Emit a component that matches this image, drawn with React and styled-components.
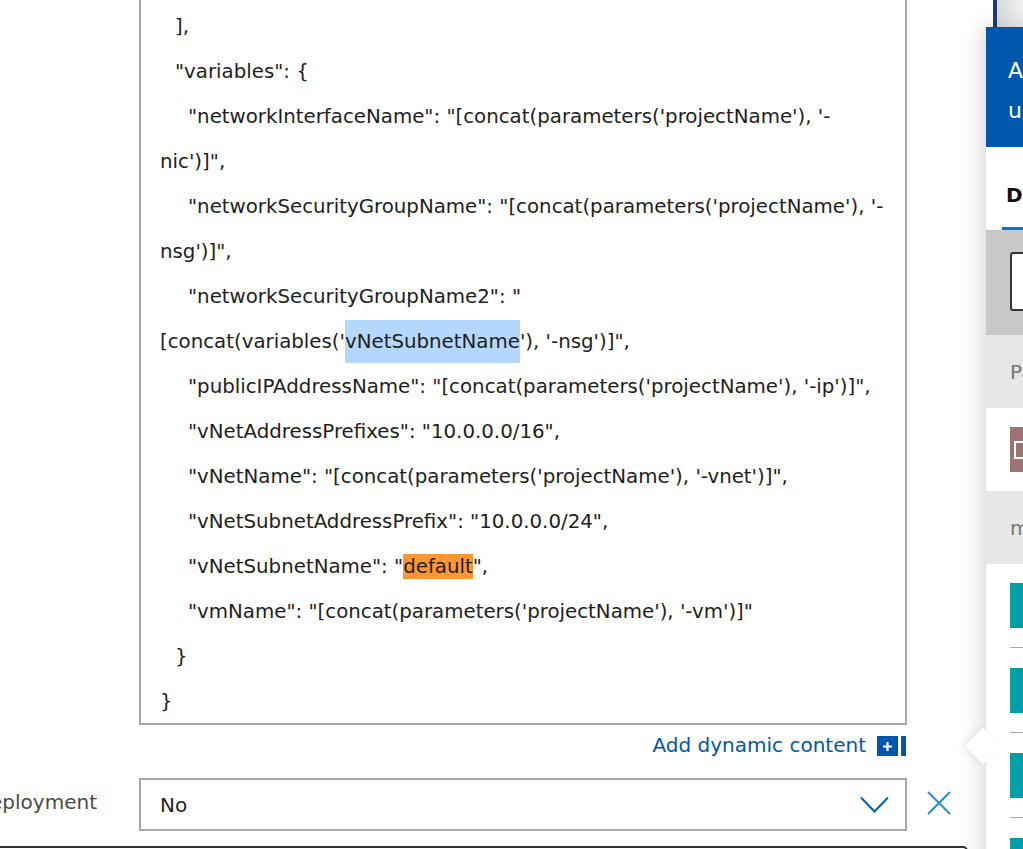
import React from "react";
import styled, { createGlobalStyle } from "styled-components";

const Global = createGlobalStyle`
  html, body { margin: 0; padding: 0; background: #fff; overflow: hidden; }
  body { font-family: "DejaVu Sans", Verdana, sans-serif; }
`;

const Page = styled.div`
  position: relative;
  width: 1023px;
  height: 849px;
  overflow: hidden;
  background: #fff;
`;

const Form = styled.div`
  display: grid;
  grid-template-columns: 139px 768px 1fr;
  margin-top: -21px;
  color: #1e1e1e;
  font-size: 20px;
`;

const CodeBox = styled.div`
  grid-column: 2;
  border: 2px solid #a8a8a8;
  padding: 22px 0 0 19px;
  box-sizing: border-box;
  font-size: 19.8px;
`;

const indentMap = { 0: 0, 1: 15, 2: 28 };

const CodeLine = styled.div`
  white-space: pre;
  line-height: 43px;
  height: 45px;
  padding-top: 2px;
  box-sizing: border-box;
  padding-left: ${(p) => indentMap[p.$indent]}px;
`;

const Selected = styled.span`
  background: #b4d7ff;
  padding: 10px 0;
`;

const Hit = styled.span`
  background: #ff9632;
  padding: 1px 0;
`;

const LinkRow = styled.div`
  grid-column: 2;
  display: flex;
  justify-content: flex-end;
  align-items: flex-start;
  gap: 11px;
  height: 53px;
  padding-top: 9px;
  box-sizing: border-box;
  margin-right: 1px;
`;

const Link = styled.span`
  color: #0058ad;
  font-size: 20px;
  line-height: 23px;
`;

const AddIcon = styled.span`
  display: flex;
  gap: 3px;
  height: 20px;
  margin-top: 2px;
`;

const AddSquare = styled.span`
  width: 21px;
  height: 20px;
  background: #0058ad;
  display: flex;
  align-items: center;
  justify-content: center;
`;

const AddBar = styled.span`
  width: 5px;
  height: 20px;
  background: #0058ad;
`;

const Label = styled.div`
  grid-column: 1;
  display: flex;
  justify-content: flex-end;
  align-items: center;
  padding: 0 42px 6px 0;
  color: #4a4a4a;
  font-size: 20px;
  white-space: nowrap;
  overflow: hidden;
`;

const Select = styled.div`
  grid-column: 2;
  height: 53px;
  border: 2px solid #a8a8a8;
  box-sizing: border-box;
  display: flex;
  align-items: center;
  justify-content: space-between;
  padding: 0 16px 0 19px;
  font-size: 20px;
  color: #1e1e1e;
`;

const CloseCell = styled.div`
  grid-column: 3;
  display: flex;
  align-items: center;
  padding-left: 20px;
  padding-bottom: 4px;
`;

const NextBox = styled.div`
  grid-column: 1 / 4;
  margin: 15px 0 0 -20px;
  width: 988px;
  height: 60px;
  border: 2px solid #333;
  border-radius: 5px;
  box-sizing: border-box;
`;

const Behind = styled.div`
  position: absolute;
  left: 993px;
  top: 0;
  width: 30px;
  height: 27px;
  border-left: 4px solid #1d3e66;
  background: linear-gradient(to right, #d9d9d9, #f3f3f3);
`;

const Flyout = styled.div`
  position: absolute;
  left: 985px;
  top: 27px;
  width: 420px;
  height: 900px;
  background: #fff;
  border-left: 1px solid #e2e2e2;
  box-shadow: -4px 0 18px rgba(0, 0, 0, 0.14);
  display: flex;
  flex-direction: column;
`;

const Beak = styled.div`
  position: absolute;
  left: -16px;
  top: 706px;
  width: 26px;
  height: 26px;
  background: #fff;
  transform: rotate(45deg);
  box-shadow: -3px 3px 8px rgba(0, 0, 0, 0.08);
`;

const Header = styled.div`
  position: relative;
  background: #0058ad;
  color: #fff;
  height: 120px;
  padding: 24px 0 0 22px;
  box-sizing: border-box;
  font-size: 22px;
  line-height: 40px;
  white-space: nowrap;
`;

const Tabs = styled.div`
  position: relative;
  height: 83px;
  display: flex;
  align-items: flex-end;
  padding-left: 16px;
  background: #fff;
`;

const Tab = styled.div`
  font-size: 20px;
  font-weight: bold;
  color: #111;
  padding: 0 0 20px 4px;
  border-bottom: 3px solid #0078d4;
  white-space: nowrap;
`;

const SearchArea = styled.div`
  background: #c8c8c8;
  height: 105px;
  padding: 22px 0 0 24px;
  box-sizing: border-box;
`;

const SearchInput = styled.div`
  height: 59px;
  background: #fff;
  border: 2px solid #333;
  border-radius: 3px;
  box-sizing: border-box;
`;

const SectionHeader = styled.div`
  background: #e7e7e7;
  height: 73px;
  display: flex;
  align-items: center;
  padding-left: 24px;
  color: #767676;
  font-size: 20px;
`;

const Item = styled.div`
  margin-left: 24px;
  padding: ${(p) => p.$pad};
  border-bottom: ${(p) => (p.$sep ? "1px solid #a8a8a8" : "none")};
  display: flex;
  align-items: center;
  gap: 12px;
  font-size: 18px;
  color: #222;
`;

const ItemIcon = styled.div`
  width: 45px;
  height: 45px;
  background: ${(p) => p.$color};
  display: flex;
  align-items: center;
  padding-left: 4px;
  box-sizing: border-box;
`;

const DocGlyph = styled.div`
  width: 8px;
  height: 14px;
  border: 2px solid #fff;
`;

const code = [
  { i: 1, t: ["],"] },
  { i: 1, t: ['"variables": {'] },
  { i: 2, t: [`"networkInterfaceName": "[concat(parameters('projectName'), '-`] },
  { i: 0, t: [`nic')]",`] },
  { i: 2, t: [`"networkSecurityGroupName": "[concat(parameters('projectName'), '-`] },
  { i: 0, t: [`nsg')]",`] },
  { i: 2, t: [`"networkSecurityGroupName2": "`] },
  { i: 0, t: [`[concat(variables('`, { sel: "vNetSubnetName" }, `'), '-nsg')]",`] },
  { i: 2, t: [`"publicIPAddressName": "[concat(parameters('projectName'), '-ip')]",`] },
  { i: 2, t: [`"vNetAddressPrefixes": "10.0.0.0/16",`] },
  { i: 2, t: [`"vNetName": "[concat(parameters('projectName'), '-vnet')]",`] },
  { i: 2, t: [`"vNetSubnetAddressPrefix": "10.0.0.0/24",`] },
  { i: 2, t: [`"vNetSubnetName": "`, { hit: "default" }, `",`] },
  { i: 2, t: [`"vmName": "[concat(parameters('projectName'), '-vm')]"`] },
  { i: 1, t: ["}"] },
  { i: 0, t: ["}"] },
];

function renderPart(p, k) {
  if (typeof p === "string") return <React.Fragment key={k}>{p}</React.Fragment>;
  if (p.sel) return <Selected key={k}>{p.sel}</Selected>;
  return <Hit key={k}>{p.hit}</Hit>;
}

export default function App() {
  return (
    <Page>
      <Global />
      <Form>
        <CodeBox>
          {code.map((l, n) => (
            <CodeLine key={n} $indent={l.i}>
              {l.t.map(renderPart)}
            </CodeLine>
          ))}
        </CodeBox>
        <LinkRow>
          <Link>Add dynamic content</Link>
          <AddIcon>
            <AddSquare>
              <svg width="11" height="11" viewBox="0 0 11 11">
                <path d="M5.5 1v9M1 5.5h9" stroke="#fff" strokeWidth="2.2" />
              </svg>
            </AddSquare>
            <AddBar />
          </AddIcon>
        </LinkRow>
        <Label>Deployment</Label>
        <Select>
          <span>No</span>
          <svg width="29" height="17" viewBox="0 0 29 17">
            <path d="M1 1.5l13.5 14 13.5-14" fill="none" stroke="#0063b1" strokeWidth="2" />
          </svg>
        </Select>
        <CloseCell>
          <svg width="24" height="24" viewBox="0 0 24 24">
            <path d="M1 1l22 22M23 1L1 23" stroke="#2b88d8" strokeWidth="2" />
          </svg>
        </CloseCell>
        <NextBox />
      </Form>
      <Behind />
      <Flyout>
        <Beak />
        <Header>
          <div>Add dynamic content from the apps and connectors</div>
          <div>used in this flow.</div>
        </Header>
        <Tabs>
          <Tab>Dynamic content</Tab>
        </Tabs>
        <SearchArea>
          <SearchInput />
        </SearchArea>
        <SectionHeader>Parameters</SectionHeader>
        <Item $pad="19px 0 19px 0">
          <ItemIcon $color="#9a7471">
            <DocGlyph />
          </ItemIcon>
          <span>Document</span>
        </Item>
        <SectionHeader>manual</SectionHeader>
        <Item $pad="19px 0 19px 0" $sep>
          <ItemIcon $color="#00a0a6" />
          <span>Name</span>
        </Item>
        <Item $pad="20px 0 19px 0" $sep>
          <ItemIcon $color="#00a0a6" />
          <span>Location</span>
        </Item>
        <Item $pad="20px 0 19px 0" $sep>
          <ItemIcon $color="#00a0a6" />
          <span>Resource group</span>
        </Item>
        <Item $pad="20px 0 19px 0">
          <ItemIcon $color="#00a0a6" />
          <span>Subscription</span>
        </Item>
      </Flyout>
    </Page>
  );
}
